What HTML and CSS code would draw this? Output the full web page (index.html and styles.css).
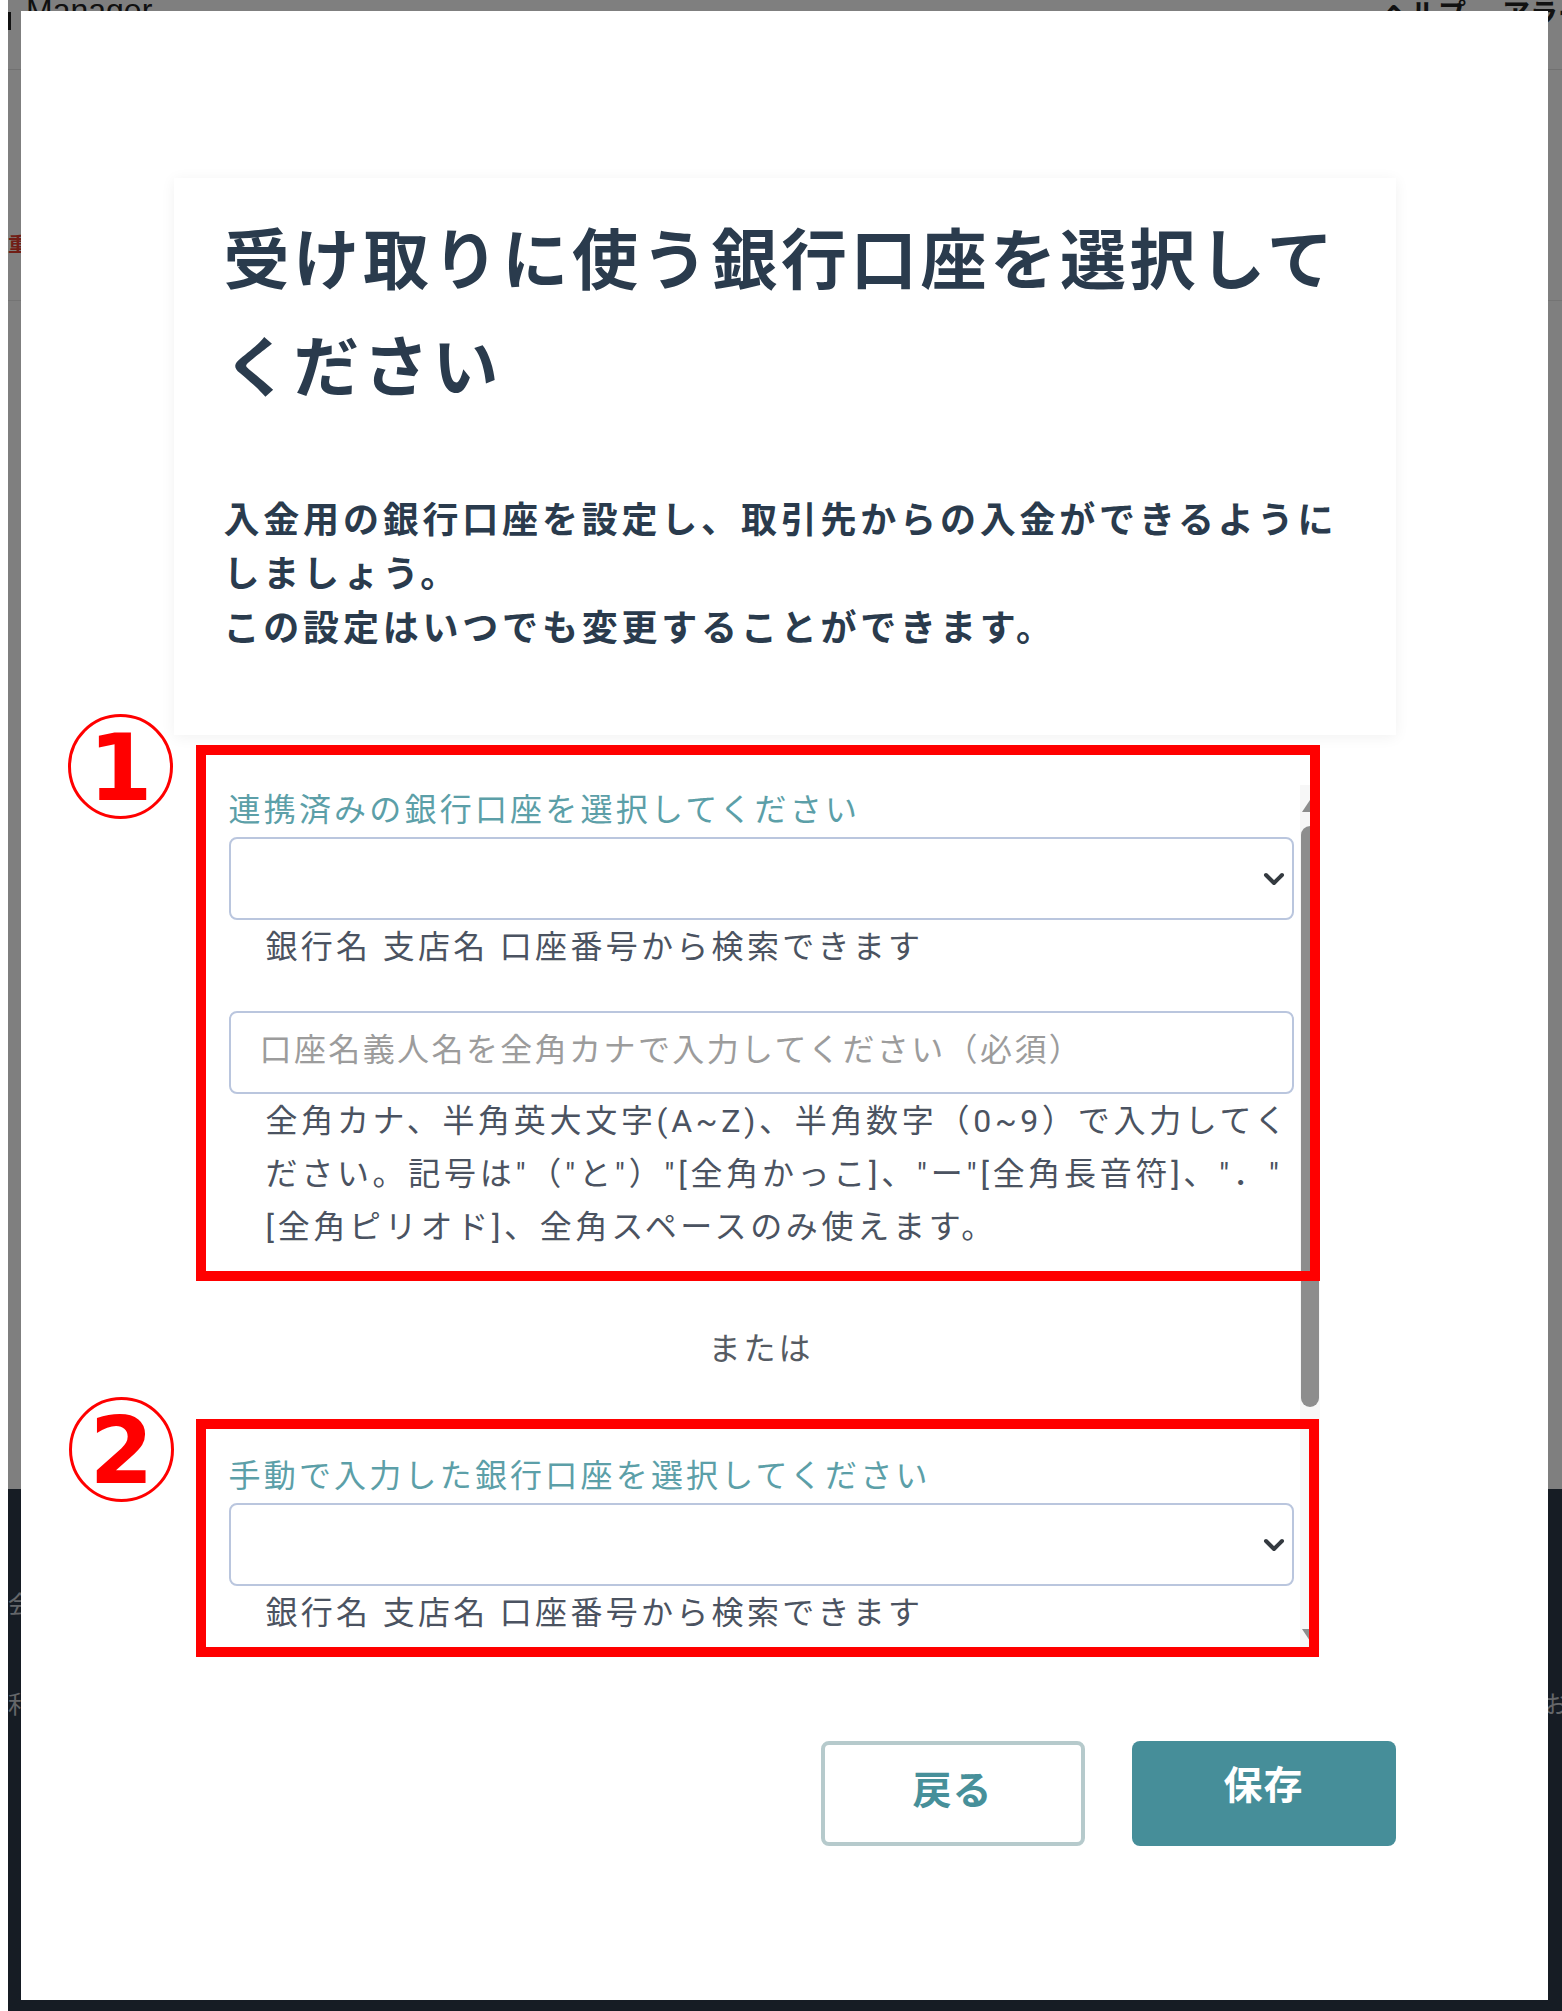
FILE: index.html
```html
<!DOCTYPE html>
<html lang="ja">
<head>
<meta charset="utf-8">
<title>受け取り口座の設定</title>
<link rel="stylesheet" href="styles.css">
</head>
<body>
<div class="app">
  <header class="app-header">
    <div class="brand"><span class="brand-bar"></span><span class="brand-name">Manager</span></div>
    <nav class="header-nav"><span>ヘルプ</span><span>アラート</span></nav>
  </header>
  <div class="app-subbar"><span class="alert-mark">重要</span></div>
  <main class="app-main"></main>
  <footer class="app-footer">
    <div class="footer-col"><span>会社</span><span>利用</span></div>
    <div class="footer-col footer-col-right"><span>お問</span></div>
  </footer>
</div>
<div class="overlay"></div>

<div class="modal">
  <div class="modal-body">
    <section class="intro-card">
      <h1 class="intro-title">受け取りに使う銀行口座を選択してください</h1>
      <p class="intro-text">入金用の銀行口座を設定し、取引先からの入金ができるように<br>しましょう。<br>この設定はいつでも変更することができます。</p>
    </section>

    <div class="scroll-area">
      <div class="scroll-content">
        <div class="field">
          <p class="field-label">連携済みの銀行口座を選択してください</p>
          <div class="select-box">
            <svg class="chevron" width="22" height="14" viewBox="0 0 22 14"><path d="M3 3 L11 11 L19 3" fill="none" stroke="#343a40" stroke-width="4" stroke-linecap="round" stroke-linejoin="round"/></svg>
          </div>
          <p class="hint">銀行名 支店名 口座番号から検索できます</p>
        </div>
        <div class="field field-name">
          <input class="text-input" type="text" placeholder="口座名義人名を全角カナで入力してください（必須）">
          <p class="hint hint-multi">全角カナ、半角英大文字(A~Z)、半角数字（0~9）で入力してく<br>ださい。記号は"（"と"）"[全角かっこ]、"ー"[全角長音符]、"．"<br>[全角ピリオド]、全角スペースのみ使えます。</p>
        </div>
        <p class="or-text">または</p>
        <div class="field field-manual">
          <p class="field-label">手動で入力した銀行口座を選択してください</p>
          <div class="select-box">
            <svg class="chevron" width="22" height="14" viewBox="0 0 22 14"><path d="M3 3 L11 11 L19 3" fill="none" stroke="#343a40" stroke-width="4" stroke-linecap="round" stroke-linejoin="round"/></svg>
          </div>
          <p class="hint">銀行名 支店名 口座番号から検索できます</p>
        </div>
      </div>
      <div class="scrollbar">
        <div class="sb-btn sb-btn-up"><span class="sb-arrow-up"></span></div>
        <div class="sb-track"><div class="sb-thumb"></div></div>
        <div class="sb-btn sb-btn-down"><span class="sb-arrow-down"></span></div>
      </div>
    </div>

    <div class="actions">
      <button class="btn btn-back" type="button">戻る</button>
      <button class="btn btn-save" type="button">保存</button>
    </div>
  </div>

  <div class="callout-box callout-box-one"></div>
  <div class="callout-box callout-box-two"></div>
  <div class="callout-num callout-num-one">1</div>
  <div class="callout-num callout-num-two">2</div>
</div>
</body>
</html>
```

FILE: styles.css
```css
* { box-sizing: border-box; }

html, body {
  margin: 0;
  padding: 0;
}

body {
  width: 1562px;
  height: 2011px;
  overflow: hidden;
  position: relative;
  background: #ffffff;
  font-family: "Noto Sans CJK JP", "Noto Sans", sans-serif;
}

/* ---------- background application ---------- */
.app {
  margin-left: 8px;
  height: 2011px;
  display: flex;
  flex-direction: column;
  background: #ffffff;
}

.app-header {
  height: 70px;
  flex: none;
  border-bottom: 1px solid #e2e2e2;
  display: flex;
  justify-content: space-between;
  align-items: flex-start;
  overflow: visible;
}

.brand {
  display: flex;
  align-items: flex-start;
  gap: 15px;
}

.brand-bar {
  width: 3px;
  height: 18px;
  margin-top: 12px;
  background: #222;
}

.brand-name {
  font-family: "Liberation Sans", sans-serif;
  font-size: 32px;
  line-height: 32px;
  margin-top: -6px;
  color: #222;
}

.header-nav {
  display: flex;
  gap: 36px;
  margin-right: -52px;
  font-size: 28px;
  line-height: 28px;
  margin-top: -2px;
  color: #222;
  font-weight: 700;
}

.app-subbar {
  height: 231px;
  flex: none;
  border-bottom: 1px solid #e8e8e8;
  padding-top: 162px;
}

.alert-mark {
  display: block;
  font-size: 20px;
  line-height: 24px;
  color: #e23c2c;
  font-weight: 700;
}

.app-main {
  height: 1188px;
  flex: none;
}

.app-footer {
  flex: 1;
  background: #2c3849;
  display: flex;
  justify-content: space-between;
  padding-top: 100px;
}

.footer-col {
  display: flex;
  flex-direction: column;
  gap: 72px;
  font-size: 24px;
  line-height: 28px;
  color: #c8ccd2;
}

.footer-col-right {
  padding-top: 100px;
  margin-right: -30px;
}

.overlay {
  position: fixed;
  left: 8px;
  top: 0;
  right: 0;
  bottom: 0;
  background: rgba(0, 0, 0, 0.5);
}

/* ---------- modal ---------- */
.modal {
  position: fixed;
  left: 21px;
  top: 11px;
  width: 1527px;
  height: 1989px;
  background: #ffffff;
}

.modal-body {
  width: 1222px;
  margin: 0 auto;
  padding-top: 167px;
}

.intro-card {
  height: 557px;
  padding: 24px 40px 0 50px;
  background: #fff;
  box-shadow: 0 2px 14px rgba(0, 0, 0, 0.06);
}

.intro-title {
  margin: 0;
  font-size: 66px;
  line-height: 107px;
  font-weight: 700;
  letter-spacing: 3.7px;
  color: #2a3b4d;
}

.intro-text {
  margin: 74px 0 0;
  font-size: 36px;
  line-height: 54px;
  font-weight: 700;
  letter-spacing: 3.8px;
  color: #2a3b4d;
  white-space: nowrap;
}

/* ---------- scrolling form area ---------- */
.scroll-area {
  margin: 50px 0 0 55px;
  width: 1091px;
  height: 865px;
  display: flex;
}

.scroll-content {
  width: 1065px;
  height: 100%;
  overflow: hidden;
  padding-top: 2px;
}

.field-label {
  margin: 0;
  font-size: 32px;
  line-height: 40px;
  letter-spacing: 3.2px;
  color: #5c9fa8;
  white-space: nowrap;
}

.select-box {
  margin-top: 10px;
  height: 83px;
  border: 2px solid #bac6de;
  border-radius: 8px;
  background: #fff;
  display: flex;
  align-items: center;
  justify-content: flex-end;
  padding-right: 7px;
}

.chevron { display: block; }

.hint {
  margin: 0;
  padding: 1px 0 0 37px;
  font-family: "Roboto", "Noto Sans CJK JP", sans-serif;
  font-size: 32px;
  line-height: 53px;
  letter-spacing: 3.3px;
  color: #4b5361;
  white-space: nowrap;
}

.field-name {
  margin-top: 37px;
}

.text-input {
  display: block;
  width: 100%;
  height: 83px;
  border: 2px solid #bac6de;
  border-radius: 8px;
  padding: 0 0 5px 29px;
  font-family: "Roboto", "Noto Sans CJK JP", "Noto Sans", sans-serif;
  font-size: 32px;
  letter-spacing: 2.4px;
  color: #333;
  background: #fff;
  outline: none;
}

.text-input::placeholder {
  color: #9c9c9c;
}

.hint-multi {
  margin-top: 0;
  letter-spacing: 3.7px;
}

.or-text {
  margin: 72px 0 0;
  text-align: center;
  font-size: 32px;
  line-height: 40px;
  letter-spacing: 3px;
  color: #555b63;
}

.field-manual {
  margin-top: 87px;
}

/* fake scrollbar */
.scrollbar {
  width: 20px;
  margin-left: 6px;
  height: 100%;
  background: #f7f7f7;
  display: flex;
  flex-direction: column;
}

.sb-btn {
  display: flex;
  align-items: center;
  justify-content: center;
  flex: none;
}

.sb-btn-up { height: 41px; }
.sb-btn-down { height: 30px; }

.sb-arrow-up {
  width: 0;
  height: 0;
  border-left: 8px solid transparent;
  border-right: 8px solid transparent;
  border-bottom: 12px solid #8d8d8d;
}

.sb-arrow-down {
  width: 0;
  height: 0;
  border-left: 8px solid transparent;
  border-right: 8px solid transparent;
  border-top: 12px solid #8d8d8d;
}

.sb-track {
  flex: 1;
  padding: 0 1px;
}

.sb-thumb {
  height: 581px;
  border-radius: 10px;
  background: #8d8d8d;
}

/* ---------- buttons ---------- */
.actions {
  margin-top: 91px;
  display: flex;
  justify-content: flex-end;
  gap: 47px;
}

.btn {
  width: 264px;
  height: 105px;
  border-radius: 8px;
  font-family: "Noto Sans CJK JP", "Noto Sans", sans-serif;
  font-size: 39px;
  font-weight: 700;
  letter-spacing: 1px;
  display: flex;
  align-items: center;
  justify-content: center;
  cursor: pointer;
}

.btn-back {
  border: 4px solid #b6cacc;
  background: #fff;
  color: #47909a;
  padding: 0 0 14px;
}

.btn-save {
  border: none;
  background: #468e99;
  color: #fff;
  padding: 0 0 24px;
}

/* ---------- red annotations ---------- */
.callout-box {
  position: absolute;
  border: 10px solid #ff0000;
}

.callout-box-one {
  left: 175px;
  top: 734px;
  width: 1124px;
  height: 536px;
}

.callout-box-two {
  left: 175px;
  top: 1408px;
  width: 1123px;
  height: 238px;
}

.callout-num {
  position: absolute;
  width: 105px;
  height: 105px;
  border: 3px solid #ff0000;
  border-radius: 50%;
  color: #ff0000;
  font-family: "DejaVu Sans", sans-serif;
  font-weight: 700;
  font-size: 92px;
  line-height: 1;
  display: flex;
  align-items: center;
  justify-content: center;
  padding-top: 4px;
}

.callout-num-one {
  left: 47px;
  top: 703px;
}

.callout-num-two {
  left: 48px;
  top: 1386px;
}
```
